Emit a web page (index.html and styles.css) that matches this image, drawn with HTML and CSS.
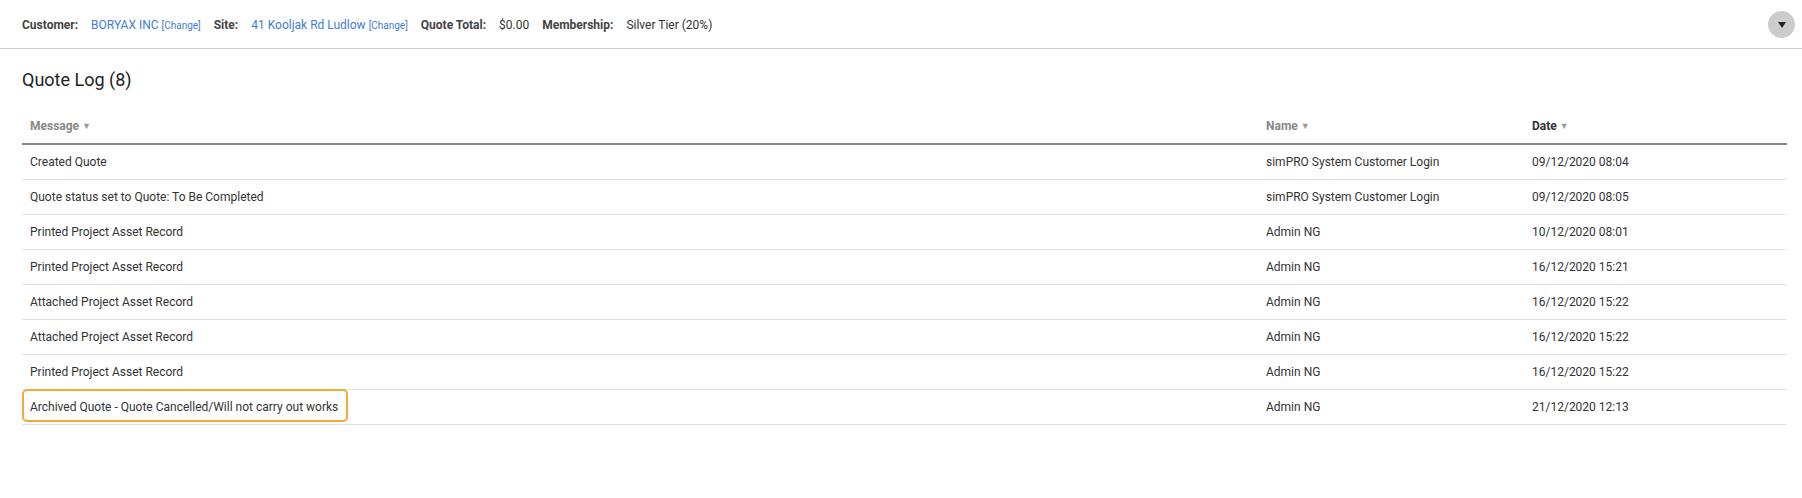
FILE: index.html
```html
<!DOCTYPE html>
<html>
<head>
<meta charset="utf-8">
<link rel="stylesheet" href="styles.css">
</head>
<body>
<header class="topbar">
  <div class="info">
    <span class="label">Customer:</span>
    <span class="value"><a class="link">BORYAX INC</a> <a class="change">[Change]</a></span>
    <span class="label">Site:</span>
    <span class="value"><a class="link">41 Kooljak Rd Ludlow</a> <a class="change">[Change]</a></span>
    <span class="label">Quote Total:</span>
    <span class="value">$0.00</span>
    <span class="label">Membership:</span>
    <span class="value">Silver Tier (20%)</span>
  </div>
  <button class="toggle"><span class="tri"></span></button>
</header>
<main class="content">
  <h1 class="title">Quote Log (8)</h1>
  <table class="log">
    <colgroup><col class="c-msg"><col class="c-name"><col class="c-date"></colgroup>
    <thead>
      <tr>
        <th>Message <span class="sort">&#9660;</span></th>
        <th>Name <span class="sort">&#9660;</span></th>
        <th class="active">Date <span class="sort">&#9660;</span></th>
      </tr>
    </thead>
    <tbody>
      <tr><td>Created Quote</td><td>simPRO System Customer Login</td><td>09/12/2020 08:04</td></tr>
      <tr><td>Quote status set to Quote: To Be Completed</td><td>simPRO System Customer Login</td><td>09/12/2020 08:05</td></tr>
      <tr><td>Printed Project Asset Record</td><td>Admin NG</td><td>10/12/2020 08:01</td></tr>
      <tr><td>Printed Project Asset Record</td><td>Admin NG</td><td>16/12/2020 15:21</td></tr>
      <tr><td>Attached Project Asset Record</td><td>Admin NG</td><td>16/12/2020 15:22</td></tr>
      <tr><td>Attached Project Asset Record</td><td>Admin NG</td><td>16/12/2020 15:22</td></tr>
      <tr><td>Printed Project Asset Record</td><td>Admin NG</td><td>16/12/2020 15:22</td></tr>
      <tr><td><span class="hl">Archived Quote - Quote Cancelled/Will not carry out works</span></td><td>Admin NG</td><td>21/12/2020 12:13</td></tr>
    </tbody>
  </table>
</main>
</body>
</html>
```
FILE: styles.css
```css
html, body {
  margin: 0;
  padding: 0;
  background: #fff;
  font-family: Roboto, "Liberation Sans", Arial, sans-serif;
  font-size: 12px;
  color: #333;
}
.topbar {
  height: 48px;
  border-bottom: 1px solid #cfcfcf;
  display: flex;
  align-items: center;
  justify-content: space-between;
  padding: 0 7px 0 22px;
}
.info {
  display: flex;
  align-items: baseline;
  margin-top: 1px;
}
.label {
  font-weight: bold;
  color: #444;
  margin-right: 13px;
}
.value {
  color: #333;
  margin-right: 13px;
}
.link {
  color: #3f7dd6;
}
.change {
  color: #3f7dd6;
  font-size: 10px;
}
.toggle {
  width: 27px;
  height: 27px;
  border-radius: 50%;
  background: #cccccc;
  border: none;
  padding: 0;
  display: flex;
  align-items: center;
  justify-content: center;
  margin-top: 1px;
}
.tri {
  width: 0;
  height: 0;
  border-left: 4px solid transparent;
  border-right: 4px solid transparent;
  border-top: 6px solid #222;
  margin-top: 1px;
}
.content {
  padding: 0 15px 0 22px;
}
.title {
  margin: 19px 0 16px;
  font-size: 18px;
  font-weight: normal;
  line-height: 24px;
  color: #222;
}
.log {
  width: 100%;
  border-collapse: collapse;
  table-layout: fixed;
}
.c-msg { width: 1236px; }
.c-name { width: 266px; }
.c-date { width: auto; }
.log th {
  text-align: left;
  font-weight: bold;
  color: #888;
  height: 35px;
  padding: 0 9px 0 8px;
  border-bottom: 2px solid #888;
  vertical-align: middle;
}
.log th.active {
  color: #333;
}
.sort {
  color: #999;
  font-size: 9px;
  vertical-align: 1px;
}
.log td {
  height: 34px;
  padding: 0 9px 0 8px;
  border-bottom: 1px solid #e2e2e2;
  vertical-align: middle;
  color: #333;
}
.hl {
  position: relative;
  display: inline-block;
  line-height: 16px;
}
.hl::after {
  content: "";
  position: absolute;
  left: -8px;
  right: -10px;
  top: -10px;
  bottom: -7px;
  border: 2px solid #f6a93b;
  border-radius: 5px;
}
```
